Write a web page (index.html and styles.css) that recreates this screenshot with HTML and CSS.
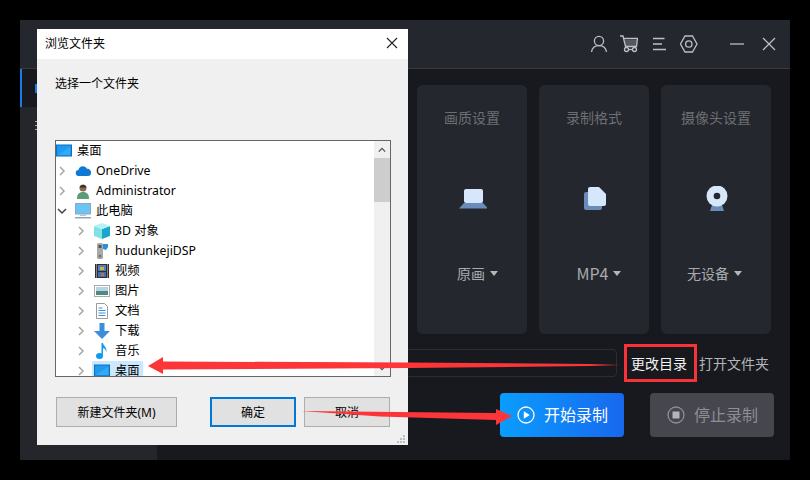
FILE: index.html
```html
<!DOCTYPE html>
<html lang="zh-CN">
<head>
    <meta charset="UTF-8">
    <meta name="viewport" content="width=device-width, initial-scale=1.0">
    <link rel="stylesheet" href="styles.css">
</head>
<body>
    <div class="app">
        <div class="app-header">
            <div class="tool-icons">
                <svg class="tool-icon" viewBox="0 0 18 18"><circle cx="9" cy="6" r="4.6"/><path d="M1.5 17c.6-4.2 3.4-6.4 7.5-6.4s6.900 2.200 7.500 6.400"/></svg>
                <svg class="tool-icon" viewBox="0 0 18 18"><path d="M4.500 5h12.500v6H5.500z" fill="#55585e" stroke="none"/><path d="M0 1h3l2.500 10.500h11L17.500 3.500H3.500"/><circle cx="6.500" cy="14.500" r="2"/><circle cx="14.500" cy="14.500" r="2"/><path d="M8.500 14.500h4"/></svg>
                <svg class="tool-icon" viewBox="0 0 18 18"><path d="M3 3.500h11.500M3 9h9M3 14.500h13"/></svg>
                <svg class="tool-icon" viewBox="0 0 18 18"><path d="M5 1h7.500l4.500 8-4.500 8H5L.500 9z"/><circle cx="8.800" cy="9" r="3.200"/></svg>
            </div>
            <div class="window-icons">
                <svg class="tool-icon" viewBox="0 0 18 18"><path d="M2 9h14"/></svg>
                <svg class="tool-icon" viewBox="0 0 18 18"><path d="M3 3l12 12M15 3L3 15"/></svg>
            </div>
        </div>
        <div class="app-body">
            <div class="sidebar">
                <div class="side-item active"><span class="side-icon"></span></div>
                <div class="side-item"><span class="side-dots"></span></div>
            </div>
            <div class="main">
                <div class="cards">
                    <div class="card"></div>
                    <div class="card"></div>
                    <div class="card">
                        <div class="card-title">画质设置</div>
                        <svg class="card-icon" viewBox="0 0 30 30"><rect x="7" y="3" width="19" height="14" rx="2" fill="#d6e6fb"/><path d="M7 17h19l5 5.500H2z" fill="#6a8cb8"/></svg>
                        <div class="card-value quality"><span>原画</span><span class="caret"></span></div>
                    </div>
                    <div class="card">
                        <div class="card-title">录制格式</div>
                        <svg class="card-icon" viewBox="0 0 30 30"><rect x="5" y="6" width="18" height="18" rx="2" fill="#6a8cb8"/><path d="M11 1h9l7 7v10a2 2 0 0 1-2 2H11a2 2 0 0 1-2-2V3a2 2 0 0 1 2-2z" fill="#d6e6fb"/></svg>
                        <div class="card-value format"><span>MP4</span><span class="caret"></span></div>
                    </div>
                    <div class="card">
                        <div class="card-title">摄像头设置</div>
                        <svg class="card-icon" viewBox="0 0 30 30"><path d="M11 19h10l2 6H9z" fill="#6a8cb8"/><circle cx="16" cy="10" r="10.500" fill="#d6e6fb"/><circle cx="16" cy="10" r="3.300" fill="#24272e"/></svg>
                        <div class="card-value camera"><span>无设备</span><span class="caret"></span></div>
                    </div>
                </div>
                <div class="path-row">
                    <div class="path-input"></div>
                    <a class="path-link marked">更改目录</a>
                    <a class="path-link">打开文件夹</a>
                </div>
                <div class="record-row">
                    <button class="record-btn start">
                        <svg class="record-icon" viewBox="0 0 18 18"><circle cx="9" cy="9" r="8" fill="none" stroke="#fff" stroke-width="1.300"/><path d="M6.800 5.200v7.600L12.800 9z" fill="#fff"/></svg>
                        <span class="record-text">开始录制</span>
                    </button>
                    <button class="record-btn stop">
                        <svg class="record-icon" viewBox="0 0 18 18"><circle cx="9" cy="9" r="8" fill="none" stroke="#8e8f94" stroke-width="1.300"/><rect x="5.500" y="5.500" width="7" height="7" fill="#b4b5b9"/></svg>
                        <span class="record-text">停止录制</span>
                    </button>
                </div>
            </div>
        </div>
    </div>

    <div class="dialog">
        <div class="dialog-title">
            <span class="dialog-title-text">浏览文件夹</span>
            <svg class="dialog-close" viewBox="0 0 12 12"><path d="M1 1l10 10M11 1L1 11" stroke="#222" stroke-width="1.100" fill="none"/></svg>
        </div>
        <div class="dialog-body">
            <div class="dialog-label">选择一个文件夹</div>
            <div class="tree">
                <div class="tree-rows">
                    <div class="tree-row">
                        <svg class="tree-icon" viewBox="0 0 16 16"><rect x=".5" y="2" width="15" height="11" fill="#1e9bf0" stroke="#0c6fc4"/><path d="M2 12l12-8v8z" fill="#35aaf4"/></svg>
                        <span>桌面</span>
                    </div>
                    <div class="tree-row level-1">
                        <svg class="chevron" viewBox="0 0 8 10"><path d="M2 1l4 4-4 4"/></svg>
                        <svg class="tree-icon" viewBox="0 0 16 16"><path d="M4 13a3 3 0 0 1-.500-6 4.500 4.500 0 0 1 8.500-1.200A3.700 3.700 0 0 1 16 10c0 1.800-1.300 3-3 3z" fill="#0f78d4"/></svg>
                        <span>OneDrive</span>
                    </div>
                    <div class="tree-row level-1">
                        <svg class="chevron" viewBox="0 0 8 10"><path d="M2 1l4 4-4 4"/></svg>
                        <svg class="tree-icon" viewBox="0 0 16 16"><path d="M2 16c0-5 2-7 6-7s6 2 6 7z" fill="#5d9c78"/><circle cx="8" cy="5" r="3.500" fill="#8a6a4f"/><path d="M4.500 4.500C5 1 11 1 11.500 4.500z" fill="#33302c"/></svg>
                        <span>Administrator</span>
                    </div>
                    <div class="tree-row level-1">
                        <svg class="chevron open" viewBox="0 0 10 10"><path d="M1 3l4 4 4-4"/></svg>
                        <svg class="tree-icon" viewBox="0 0 16 16"><rect x=".5" y=".5" width="15" height="10.500" fill="#6cc4f2" stroke="#8fa6bd"/><rect x="5" y="11.500" width="6" height="1.500" fill="#b7c4d1"/><rect y="14" width="16" height="1.500" fill="#8fa6bd"/></svg>
                        <span>此电脑</span>
                    </div>
                    <div class="tree-row level-2">
                        <svg class="chevron" viewBox="0 0 8 10"><path d="M2 1l4 4-4 4"/></svg>
                        <svg class="tree-icon" viewBox="0 0 16 16"><path d="M0 3l8 3v10l-8-3z" fill="#7fe3e6"/><path d="M16 3L8 6v10l8-3z" fill="#1aa7c9"/><path d="M0 3l8-3 8 3-8 3z" fill="#b5f0f2"/></svg>
                        <span>3D 对象</span>
                    </div>
                    <div class="tree-row level-2">
                        <svg class="chevron" viewBox="0 0 8 10"><path d="M2 1l4 4-4 4"/></svg>
                        <svg class="tree-icon" viewBox="0 0 16 16"><rect x="3" y="0" width="6" height="16" rx="1.500" fill="#a9a9a9"/><rect x="4.500" y="2" width="3" height="3" fill="#555"/><circle cx="6" cy="13" r="1.500" fill="#777"/><path d="M9 1h5v3l-2 3-3-1z" fill="#2b8fd8"/></svg>
                        <span>hudunkejiDSP</span>
                    </div>
                    <div class="tree-row level-2">
                        <svg class="chevron" viewBox="0 0 8 10"><path d="M2 1l4 4-4 4"/></svg>
                        <svg class="tree-icon" viewBox="0 0 16 16"><rect x="1" y="1" width="14" height="14" fill="#2f2f2f"/><path d="M2.500 1.500v13M13.500 1.500v13" stroke="#ddd" stroke-dasharray="1 1"/><rect x="4" y="2" width="8" height="6" fill="#4f7fc4"/><rect x="4" y="9" width="8" height="5" fill="#3d6fb8"/><rect x="6" y="4" width="4" height="3" fill="#d6b23a"/><rect x="7" y="10" width="3" height="3" fill="#c9703a"/></svg>
                        <span>视频</span>
                    </div>
                    <div class="tree-row level-2">
                        <svg class="chevron" viewBox="0 0 8 10"><path d="M2 1l4 4-4 4"/></svg>
                        <svg class="tree-icon" viewBox="0 0 16 16"><rect x=".5" y="2.500" width="15" height="11" fill="#fff" stroke="#a8a8a8"/><rect x="2" y="4" width="12" height="4" fill="#b6d3e8"/><rect x="2" y="8" width="12" height="4" fill="#4f8a7a"/></svg>
                        <span>图片</span>
                    </div>
                    <div class="tree-row level-2">
                        <svg class="chevron" viewBox="0 0 8 10"><path d="M2 1l4 4-4 4"/></svg>
                        <svg class="tree-icon" viewBox="0 0 16 16"><path d="M2.500.500h8l3 3v12h-11z" fill="#fff" stroke="#9a9a9a"/><path d="M4.500 5h4M4.500 7.500h7M4.500 10h7M4.500 12.500h7" stroke="#3b8fd0"/></svg>
                        <span>文档</span>
                    </div>
                    <div class="tree-row level-2">
                        <svg class="chevron" viewBox="0 0 8 10"><path d="M2 1l4 4-4 4"/></svg>
                        <svg class="tree-icon" viewBox="0 0 16 16"><path d="M5.500 0h5v8H16l-8 8-8-8h5.500z" fill="#3a8edb"/></svg>
                        <span>下载</span>
                    </div>
                    <div class="tree-row level-2">
                        <svg class="chevron" viewBox="0 0 8 10"><path d="M2 1l4 4-4 4"/></svg>
                        <svg class="tree-icon" viewBox="0 0 16 16"><ellipse cx="5.500" cy="13" rx="3.500" ry="3" fill="#0f9bec"/><path d="M7.500 0h1.500c.3 3 4 4 3.500 9-.8-2.500-2-3.500-3.500-4v8H7.500z" fill="#0f9bec"/></svg>
                        <span>音乐</span>
                    </div>
                    <div class="tree-row level-2">
                        <svg class="chevron" viewBox="0 0 8 10"><path d="M2 1l4 4-4 4"/></svg>
                        <div class="tree-selected">
                            <svg class="tree-icon" viewBox="0 0 16 16"><rect x=".5" y="2" width="15" height="11" fill="#1e9bf0" stroke="#0c6fc4"/><path d="M2 12l12-8v8z" fill="#35aaf4"/></svg>
                            <span>桌面</span>
                        </div>
                    </div>
                </div>
                <div class="scrollbar">
                    <svg class="scroll-arrow" viewBox="0 0 10 6"><path d="M1 5l4-4 4 4"/></svg>
                    <div class="scroll-thumb"></div>
                    <svg class="scroll-arrow bottom" viewBox="0 0 10 6"><path d="M1 1l4 4 4-4"/></svg>
                </div>
            </div>
            <div class="dialog-buttons">
                <button class="dialog-btn new-folder">新建文件夹(M)</button>
                <button class="dialog-btn ok">确定</button>
                <button class="dialog-btn">取消</button>
            </div>
        </div>
        <svg class="grip" viewBox="0 0 8 8"><path d="M6 0h2v2H6zM3 3h2v2H3zM6 3h2v2H6zM0 6h2v2H0zM3 6h2v2H3zM6 6h2v2H6z" fill="#bdbdbd"/></svg>
    </div>

    <svg class="arrows" viewBox="0 0 810 480">
        <path d="M148 366l15-9v4.500l247 1 180 1.500 30 1-30 1-180 2-247 1.500v4.500z"/>
        <path d="M301 411l195 2v-4l16 7-16 9v-5l-116-3.500z"/>
    </svg>
</body>
</html>
```

FILE: styles.css
```css
* {
    box-sizing: border-box;
}
body {
    margin: 0;
    padding: 20px;
    width: 810px;
    height: 480px;
    overflow: hidden;
    background-color: #000000;
    font-family: "Noto Sans CJK SC", "Noto Sans", sans-serif;
}
.app {
    width: 770px;
    height: 440px;
    display: flex;
    flex-direction: column;
    background-color: #18191e;
}
.app-header {
    height: 49px;
    flex-shrink: 0;
    display: flex;
    justify-content: flex-end;
    align-items: center;
    padding-right: 12px;
    background-color: #24272e;
    border-bottom: 1px solid #383a40;
}
.tool-icons {
    display: flex;
    gap: 12px;
}
.window-icons {
    display: flex;
    gap: 14px;
    margin-left: 30px;
}
.tool-icon {
    width: 18px;
    height: 18px;
    fill: none;
    stroke: #bdbfc3;
    stroke-width: 1.3;
}
.app-body {
    flex: 1;
    display: flex;
    min-height: 0;
}
.sidebar {
    width: 137px;
    background-color: #24262c;
}
.side-item {
    height: 38px;
    padding-left: 15px;
    display: flex;
    align-items: center;
}
.side-item.active {
    background-color: #18191e;
    border-left: 2px solid #1a7be6;
    padding-left: 13px;
}
.side-icon {
    width: 10px;
    height: 9px;
    background-color: #1a7be6;
}
.side-dots {
    width: 10px;
    height: 10px;
    background: repeating-linear-gradient(#a5a6a9 0 1px, transparent 1px 4px);
}
.main {
    flex: 1;
    padding: 16px 16px 0;
}
.cards {
    display: grid;
    grid-template-columns: repeat(5, 110px);
    gap: 12px;
}
.card {
    height: 249px;
    padding-top: 22px;
    display: flex;
    flex-direction: column;
    align-items: center;
    background-color: #24272e;
    border-radius: 6px;
}
.card-title {
    font-size: 14px;
    line-height: 20px;
    color: #6e6f73;
}
.card-icon {
    width: 30px;
    height: 30px;
    margin-top: 59px;
}
.card-value {
    margin-top: 47px;
    display: flex;
    align-items: center;
    gap: 5px;
    font-size: 14px;
    line-height: 20px;
    color: #a9abb0;
}
.card-value.quality {
    padding-left: 11px;
}
.card-value.format {
    padding-left: 9px;
    gap: 4px;
    font-size: 16px;
}
.card-value.camera {
    padding-right: 3px;
}
.caret {
    width: 0;
    height: 0;
    border-left: 4px solid transparent;
    border-right: 4px solid transparent;
    border-top: 5px solid #b5b6b9;
}
.path-row {
    height: 38px;
    margin-top: 10px;
    padding-right: 5px;
    display: flex;
    align-items: center;
    justify-content: flex-end;
    gap: 2px;
}
.path-input {
    flex: 1;
    height: 28px;
    margin-right: 5px;
    border: 1px solid #2c2d32;
    border-radius: 4px;
}
.path-link {
    font-size: 14px;
    line-height: 20px;
    color: #b4b5b8;
}
.path-link.marked {
    height: 38px;
    padding: 6px 7px 0 4px;
    color: #f2f2f2;
    border: 3px solid #f83236;
}
.record-row {
    margin-top: 11px;
    display: flex;
    justify-content: flex-end;
    gap: 26px;
}
.record-btn {
    width: 124px;
    height: 44px;
    padding: 0 0 0 17px;
    display: flex;
    align-items: center;
    gap: 9px;
    border: none;
    border-radius: 4px;
    font-family: inherit;
    font-size: 16px;
}
.record-btn.start {
    color: #ffffff;
    background: linear-gradient(90deg, #0a9dfe, #1868ee);
}
.record-btn.stop {
    color: #8e8f94;
    background-color: #45464e;
}
.record-icon {
    width: 18px;
    height: 18px;
}
.record-text {
    margin-bottom: 2px;
}

/* dialog over the app */
.dialog {
    position: absolute;
    left: 37px;
    top: 29px;
    width: 371px;
    height: 416px;
    display: flex;
    flex-direction: column;
    background-color: #f0f0f0;
    font-size: 12px;
    color: #000000;
    font-family: "Noto Sans", "Noto Sans CJK SC", sans-serif;
}
.dialog-title {
    height: 30px;
    flex-shrink: 0;
    padding: 0 10px 0 8px;
    display: flex;
    align-items: center;
    justify-content: space-between;
    background-color: #ffffff;
}
.dialog-title-text {
    margin-bottom: 2px;
}
.dialog-close {
    width: 12px;
    height: 12px;
    margin-top: -2px;
}
.dialog-body {
    padding: 16px 17px 0 18px;
}
.dialog-label {
    line-height: 18px;
}
.tree {
    height: 237px;
    margin-top: 47px;
    display: flex;
    background-color: #ffffff;
    border: 1px solid #666666;
    overflow: hidden;
}
.tree-rows {
    flex: 1;
}
.tree-row {
    height: 20px;
    display: flex;
    align-items: center;
    white-space: nowrap;
    font-size: 12.3px;
}
.tree-row span {
    margin-bottom: 2px;
}
.tree-row.level-1 {
    padding-left: 1px;
}
.tree-row.level-2 {
    padding-left: 20px;
}
.chevron {
    width: 10px;
    height: 10px;
    margin-right: 8px;
    fill: none;
    stroke: #a6a6a6;
    stroke-width: 1.5;
}
.chevron.open {
    stroke: #444444;
}
.tree-icon {
    width: 16px;
    height: 16px;
    margin-right: 5px;
    flex-shrink: 0;
}
.tree-selected {
    display: flex;
    align-items: center;
    height: 20px;
    margin-left: -2px;
    padding: 0 3px 0 2px;
    background-color: #cce8ff;
}
.scrollbar {
    width: 16px;
    display: flex;
    flex-direction: column;
    align-items: center;
    background-color: #f0f0f0;
}
.scroll-arrow {
    width: 8px;
    height: 6px;
    margin: 6px 0 5px;
    flex-shrink: 0;
    fill: none;
    stroke: #505050;
    stroke-width: 1.6;
}
.scroll-arrow.bottom {
    margin: auto 0 5px;
}
.scroll-thumb {
    width: 16px;
    height: 44px;
    background-color: #cdcdcd;
}
.dialog-buttons {
    margin-top: 20px;
    padding-left: 1px;
    display: flex;
    gap: 8px;
}
.dialog-btn {
    width: 86px;
    height: 30px;
    padding: 0;
    font-family: inherit;
    font-size: 12px;
    color: #000000;
    background-color: #e1e1e1;
    border: 1px solid #adadad;
}
.dialog-btn.new-folder {
    width: 121px;
    margin-right: 25px;
}
.dialog-btn.ok {
    border: 2px solid #0078d7;
}
.grip {
    position: absolute;
    right: 3px;
    bottom: 2px;
    width: 8px;
    height: 8px;
}
.arrows {
    position: absolute;
    left: 0;
    top: 0;
    width: 810px;
    height: 480px;
    fill: #fb3538;
}
```
